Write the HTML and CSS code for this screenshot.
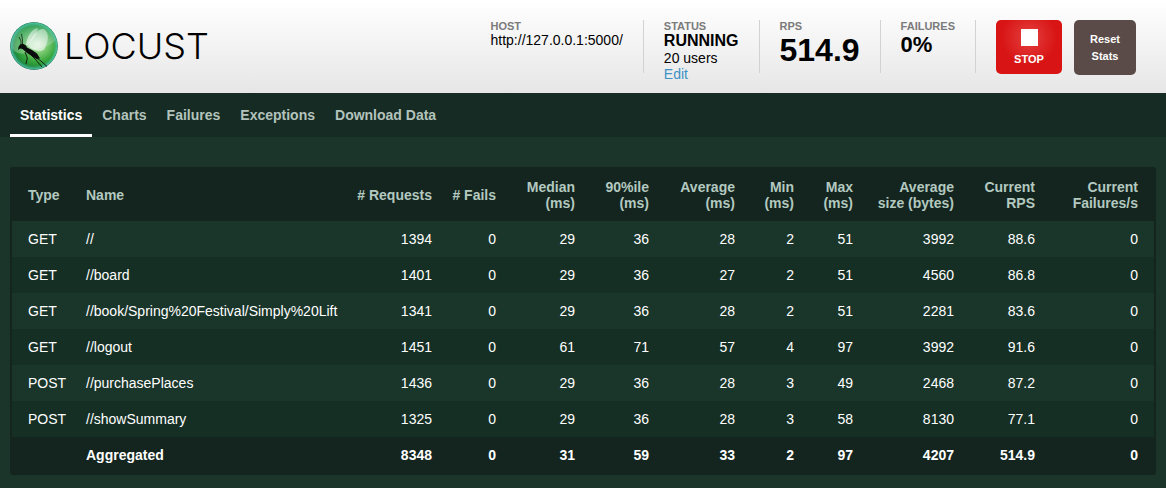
FILE: index.html
```html
<!DOCTYPE html>
<html lang="en">
<head>
<meta charset="utf-8">
<title>Locust</title>
<link rel="stylesheet" href="styles.css">
</head>
<body>
<header class="top">
  <a class="logo" href="#" aria-label="Locust">
    <svg class="logo-mark" viewBox="0 0 48 48" aria-hidden="true">
      <defs>
        <radialGradient id="orb" cx="58%" cy="45%" r="58%">
          <stop offset="0" stop-color="#d2efc8"/>
          <stop offset=".35" stop-color="#7cca72"/>
          <stop offset=".68" stop-color="#35a53a"/>
          <stop offset="1" stop-color="#167a3c"/>
        </radialGradient>
        <radialGradient id="rim" cx="50%" cy="50%" r="50%">
          <stop offset=".84" stop-color="#4fc7b4" stop-opacity="0"/>
          <stop offset=".96" stop-color="#56cdbd" stop-opacity=".7"/>
          <stop offset="1" stop-color="#2b7d6c"/>
        </radialGradient>
        <linearGradient id="gloss" x1="0" y1="0" x2="0" y2="1">
          <stop offset="0" stop-color="#2f9c78" stop-opacity=".5"/>
          <stop offset="1" stop-color="#ffffff" stop-opacity=".25"/>
        </linearGradient>
        <linearGradient id="wing" x1="1" y1="0" x2="0" y2="1">
          <stop offset="0" stop-color="#ffffff" stop-opacity=".4"/>
          <stop offset="1" stop-color="#ffffff" stop-opacity=".65"/>
        </linearGradient>
      </defs>
      <circle cx="24" cy="24" r="23.7" fill="url(#orb)"/>
      <path d="M1 25A23 23 0 0 1 46 18C40 25 30 25 22 29C13 33 6 33 1 25Z" fill="url(#gloss)"/>
      <circle cx="24" cy="24" r="23.7" fill="url(#rim)"/>
      <path d="M16 23C17 14 22 7 27.500 6C29 9 23 17 17.500 23.500Z" fill="url(#wing)"/>
      <path d="M18 24C22 14 28 6 34 7C40 11 38 20 34.500 27C31 31 24 29 18 24Z" fill="url(#wing)"/>
      <path d="M8 28L8.500 25L10 22.500L13 21.800L16 23.500L17 25.500L22 28L27 31.500L30 36.500L26.500 37L21 33.500L16.500 30.500L12.500 27L10 26.500Z" fill="#0a0d0b"/>
      <path d="M11 23L11 19L9 15M12.500 22.500L12.500 18L11.500 12" fill="none" stroke="#0a0d0b" stroke-width=".7"/>
      <path d="M15 30L17.300 36L16 42M20 32L26 38L32 45M25 35L31 39L37 44.500" fill="none" stroke="#0a0d0b" stroke-width=".9"/>
    </svg>
    <span class="logo-text">LOCUST</span>
  </a>
  <div class="boxes">
    <section class="box">
      <h2 class="label">HOST</h2>
      <div class="host">http://127.0.0.1:5000/</div>
    </section>
    <section class="box">
      <h2 class="label">STATUS</h2>
      <div class="status">RUNNING</div>
      <div>20 users</div>
      <a class="edit" href="#">Edit</a>
    </section>
    <section class="box">
      <h2 class="label">RPS</h2>
      <div class="rps">514.9</div>
    </section>
    <section class="box">
      <h2 class="label">FAILURES</h2>
      <div class="fail-ratio">0%</div>
    </section>
    <div class="actions">
      <button class="btn stop" type="button"><span class="stop-icon"></span>STOP</button>
      <button class="btn reset" type="button">Reset<br>Stats</button>
    </div>
  </div>
</header>
<nav class="tabs">
  <a class="tab active" href="#">Statistics</a>
  <a class="tab" href="#">Charts</a>
  <a class="tab" href="#">Failures</a>
  <a class="tab" href="#">Exceptions</a>
  <a class="tab" href="#">Download Data</a>
</nav>
<main class="content">
  <div class="panel">
    <table class="stats">
      <colgroup>
        <col class="c-type"><col><col class="c-requests"><col class="c-fails"><col class="c-median"><col class="c-ninety"><col class="c-average"><col class="c-min"><col class="c-max"><col class="c-size"><col class="c-rps"><col class="c-failrate">
      </colgroup>
      <thead>
        <tr><th>Type</th><th>Name</th><th># Requests</th><th># Fails</th><th>Median<br>(ms)</th><th>90%ile<br>(ms)</th><th>Average<br>(ms)</th><th>Min<br>(ms)</th><th>Max<br>(ms)</th><th>Average<br>size (bytes)</th><th>Current<br>RPS</th><th>Current<br>Failures/s</th></tr>
      </thead>
      <tbody>
        <tr><td>GET</td><td>//</td><td>1394</td><td>0</td><td>29</td><td>36</td><td>28</td><td>2</td><td>51</td><td>3992</td><td>88.6</td><td>0</td></tr>
        <tr><td>GET</td><td>//board</td><td>1401</td><td>0</td><td>29</td><td>36</td><td>27</td><td>2</td><td>51</td><td>4560</td><td>86.8</td><td>0</td></tr>
        <tr><td>GET</td><td>//book/Spring%20Festival/Simply%20Lift</td><td>1341</td><td>0</td><td>29</td><td>36</td><td>28</td><td>2</td><td>51</td><td>2281</td><td>83.6</td><td>0</td></tr>
        <tr><td>GET</td><td>//logout</td><td>1451</td><td>0</td><td>61</td><td>71</td><td>57</td><td>4</td><td>97</td><td>3992</td><td>91.6</td><td>0</td></tr>
        <tr><td>POST</td><td>//purchasePlaces</td><td>1436</td><td>0</td><td>29</td><td>36</td><td>28</td><td>3</td><td>49</td><td>2468</td><td>87.2</td><td>0</td></tr>
        <tr><td>POST</td><td>//showSummary</td><td>1325</td><td>0</td><td>29</td><td>36</td><td>28</td><td>3</td><td>58</td><td>8130</td><td>77.1</td><td>0</td></tr>
      </tbody>
      <tfoot>
        <tr><td></td><td>Aggregated</td><td>8348</td><td>0</td><td>31</td><td>59</td><td>33</td><td>2</td><td>97</td><td>4207</td><td>514.9</td><td>0</td></tr>
      </tfoot>
    </table>
  </div>
</main>
</body>
</html>
```
FILE: styles.css
```css
* { box-sizing: border-box; }

body {
  margin: 0;
  background: #1b352a;
  color: #fff;
  font: 14px/16px "Liberation Sans", Arial, sans-serif;
}

a { text-decoration: none; }

.top {
  display: flex;
  justify-content: space-between;
  padding: 20px 30px 18px 10px;
  background: linear-gradient(#fff, #e6e6e6);
  color: #000;
}

.logo {
  display: flex;
  align-items: center;
  gap: 6px;
  height: 52px;
  color: #000;
}

.logo-mark { width: 48px; height: 48px; }

.logo-text {
  font: 300 36px/48px Inter, Lato, sans-serif;
}

.boxes { display: flex; align-items: flex-start; }

.box {
  height: 53px;
  padding: 0 20px;
  border-right: 1px solid #d2d2d2;
}

.label {
  margin: 0;
  color: #7b7b7b;
  font-size: 11px;
  line-height: 12px;
}

.status { font-size: 16px; font-weight: bold; line-height: 18px; }
.edit { display: block; color: #3d92c4; }
.rps { font-size: 32px; font-weight: bold; line-height: 36px; }
.fail-ratio { font-size: 22px; font-weight: bold; line-height: 26px; }

.actions {
  display: flex;
  align-items: flex-start;
  gap: 12px;
  padding-left: 20px;
}

.btn {
  padding: 0;
  border: 0;
  border-radius: 5px;
  color: #fff;
  font: bold 11px/17px "Liberation Sans", Arial, sans-serif;
  text-align: center;
}

.stop {
  display: flex;
  flex-direction: column;
  align-items: center;
  gap: 5px;
  width: 66px;
  height: 54px;
  padding-top: 9px;
  background: radial-gradient(circle at 50% 32%, #e44040, #d81414 28px);
}

.stop-icon { width: 17px; height: 17px; background: #fff; }

.reset { width: 62px; height: 55px; background: #5a4b48; }

.tabs {
  display: flex;
  padding: 0 10px;
  background: #162b23;
}

.tab {
  padding: 14px 10px 11px;
  border-bottom: 3px solid transparent;
  color: #b3c3bc;
  font-weight: bold;
}

.tab.active { border-color: #fff; color: #fff; }

.content { padding: 30px 10px 13px; }

.panel {
  padding: 0 2px 2px;
  border-radius: 3px;
  background: #13251e;
}

.stats {
  width: 100%;
  min-width: 1100px;
  border-collapse: collapse;
  table-layout: fixed;
}

.c-type, .c-fails { width: 64px; }
.c-requests { width: 95px; }
.c-median { width: 79px; }
.c-ninety { width: 74px; }
.c-average { width: 86px; }
.c-min, .c-max { width: 59px; }
.c-size { width: 101px; }
.c-rps { width: 81px; }
.c-failrate { width: 109px; }

th, td {
  padding: 10px;
  text-align: right;
  white-space: nowrap;
}

th { padding: 12px 10px 10px; color: #b3c9c0; }

th:nth-child(-n+2), td:nth-child(-n+2) { text-align: left; }
th:first-child, td:first-child { padding-left: 16px; padding-right: 0; }
th:last-child, td:last-child { padding-right: 16px; }

tbody tr { background: #1a352a; }
tbody tr:nth-child(even) { background: #162f25; }
tfoot { font-weight: bold; }
```
